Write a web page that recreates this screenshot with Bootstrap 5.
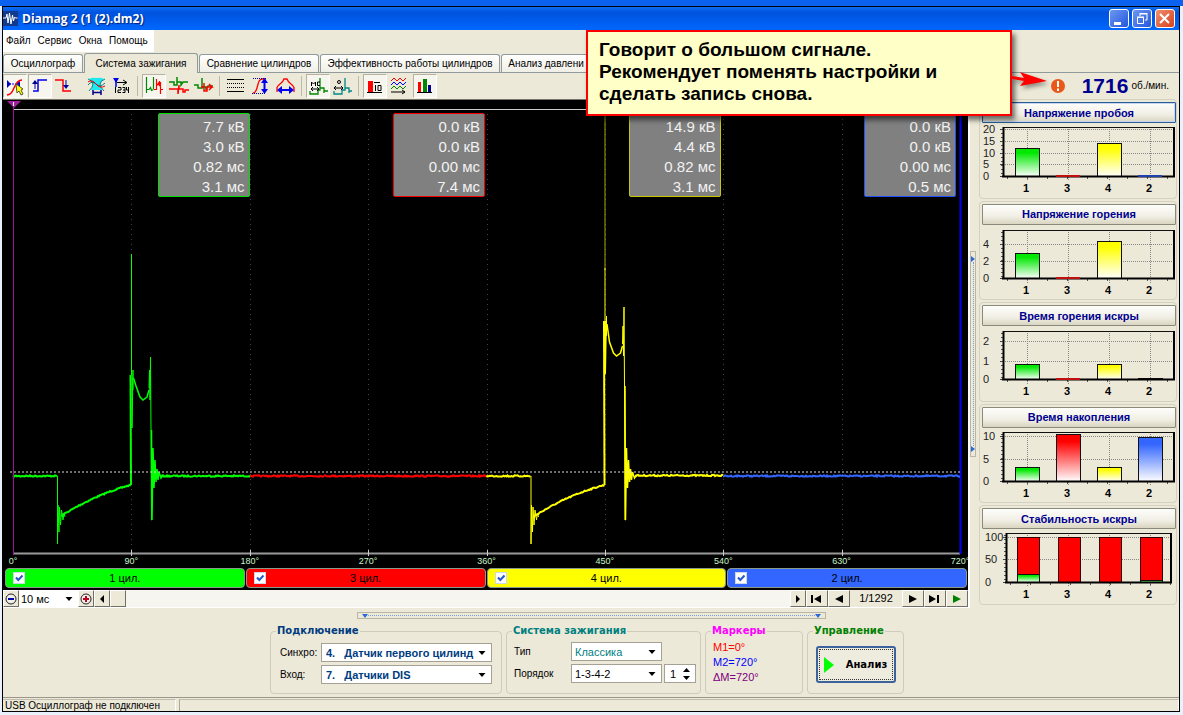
<!DOCTYPE html>
<html lang="ru">
<head>
<meta charset="utf-8">
<meta name="viewport" content="width=device-width, initial-scale=1">
<title>Diamag 2</title>
<link href="https://cdn.jsdelivr.net/npm/bootstrap@5.3.0/dist/css/bootstrap.min.css" rel="stylesheet">
<style>
:root { --face:#ece9d8; --line:#aca899; --ui:"Liberation Sans",Arial,sans-serif; --wide:"DejaVu Sans",Verdana,sans-serif; }
body { background:#e9f1fd; font:10px/14px var(--ui); color:#000; }
.parent-strip { height:6px; background:#0a62ee; }
.app { margin:0 3px 3px 2px; border:1px solid #000; background:var(--face); position:relative; }
.titlebar { height:23px; background:linear-gradient(#0a6cf5,#0052dd 25%,#005cee 60%,#0068ff); color:#fff; font:bold 12px/22px "Open Sans",sans-serif; text-shadow:1px 1px 1px #00207a; }
.win-btn { width:20px; height:19px; border:1px solid #fff; border-radius:3px; background:linear-gradient(135deg,#6d97f2,#2458dc); padding:0; display:flex; }
.win-btn.shut { background:linear-gradient(135deg,#f09070,#d8401c); }
.menubar { height:22px; width:151px; background:#fff; padding:0 3px; gap:7px; }
.menubar a { color:#000; text-decoration:none; line-height:22px; }
.tabstrip { height:21px; padding-top:2px; border-bottom:1px solid #919b9c; gap:1px; }
.tabstrip .nav-link { height:18px; padding:0; margin:0; border:1px solid #919b9c; border-bottom:0; border-radius:3px 3px 0 0; background:linear-gradient(#fff,#f0efe6); color:#000; line-height:17px; text-align:center; white-space:nowrap; overflow:hidden; }
.tabstrip .nav-link.active { height:20px; margin:-1px 0 -1px; background:var(--face); color:#000; }
.t1 { width:80px; } .t2 { width:114px; } .t3 { width:120px; } .t4 { width:180px; } .t5 { width:90px; }
.toolbar { height:26px; gap:1px; }
.tool { width:24px; height:24px; padding:0; border:1px solid transparent; border-radius:0; background:none; display:flex; }
.tool.on { border-color:#b5b2a2 #fff #fff #b5b2a2; background:#f6f5ee; }
.tool svg { margin:-1px; }
.tool-sep { width:6px; height:20px; border-left:1px solid #bdb9a8; margin-left:2px; margin-right:-2px; }
.tool-sep.ghost { border-color:transparent; }
.work { min-height:460px; }
.left-col { min-width:0; border-right:2px solid #fff; }
.scope { background:#000; min-height:300px; border-top:1px solid #77756b; overflow:hidden; }
.scope-grid { inset:0 12px 0 11px; }
.readout { width:92px; height:84px; margin:13px 0 0; border:1px solid; border-radius:2px; background:#808080; color:#f2f2f2; font-size:15px; line-height:20px; padding:3px 4px; text-align:right; white-space:nowrap; }
.r-g { border-color:#00e000; } .r-r { border-color:#f00000; } .r-y { border-color:#c8c800; } .r-b { border-color:#2050ff; }
.readout span { color:#f2f2f2; }
.degrees { left:10px; right:8px; bottom:0; height:13px; color:#c8f5c8; font:9px/13px var(--ui); }
.degrees span { width:0; display:flex; justify-content:center; white-space:nowrap; }
.cyls { background:#000; height:22px; padding:0 1px 2px 2px; gap:1px; }
.cyl { font-size:11px; border:1px solid #8a9a8a; border-radius:4px; height:20px; display:grid; grid-template-columns:12px 1fr 12px; align-items:center; padding:0 7px; text-align:center; }
.cyl input { appearance:none; margin:0; width:12px; height:12px; background:#fff; border:1px solid #cfd8e6; }
.cyl input:checked { background:#fff url("data:image/svg+xml,%3Csvg xmlns='http://www.w3.org/2000/svg' viewBox='0 0 10 10'%3E%3Cpath d='M2 4.5L4.3 7 8.5 2.5' fill='none' stroke='%232858c8' stroke-width='2'/%3E%3C/svg%3E"); }
.c-g { background:#0f0; } .c-r { background:#f00; } .c-y { background:#ff0; } .c-b { background:#3366ff; }
.player { height:18px; background:#f6f5ef; border-bottom:1px solid #fff; font-size:11px; }
.frame-no { width:52px; line-height:17px; background:var(--face); }
.pbtn { height:17px; width:22px; padding:0; border:1px solid; border-color:#fff #716f64 #716f64 #fff; border-radius:0; background:var(--face); display:flex; align-items:center; justify-content:center; }
.pbtn.slim { width:16px; }
.player .form-select { width:59px; border:0; height:17px; padding-left:2px; }
.form-select { --arrow:url("data:image/svg+xml,%3Csvg xmlns='http://www.w3.org/2000/svg' viewBox='0 0 8 4'%3E%3Cpath d='M0.5 0h7L4 4z'/%3E%3C/svg%3E"); font-size:11px; line-height:14px; padding:1px 16px 1px 3px; border:1px solid #a5a295; border-radius:0; color:#000; background:#fff var(--arrow) no-repeat right 5px center/8px 4px; height:19px; min-height:0; }
.vsplit { width:7px; margin-right:1px; padding-top:26px; }
.grip-v { width:6px; height:206px; border:1px solid #b9b6a6; }
.grip-v i { flex:1; border-left:1px dotted #7ba0dc; }
.grip-h { width:469px; height:7px; border:1px solid #b9b6a6; margin:4px auto 6px; }
.grip-h i { flex:1; border-top:1px dotted #7ba0dc; }
.right-col { width:201px; padding:0 2px 3px 1px; }
.rpm { height:26px; padding-right:8px; }
.rpm b { font-size:21px; line-height:26px; color:#000090; margin:0 3px 0 16px; }
.meter { border:1px solid #d5d1c0; border-radius:4px; padding:2px; margin-bottom:2px; min-height:94px; }
.meter:last-child { margin-bottom:0; }
.meter .btn { width:194px; height:21px; padding:0; border:1px solid #8b8a7a; border-radius:1px; background:linear-gradient(#fdfdfb,#f1efe4 60%,#d9d5c2); color:#000090; font:bold 11px/18px var(--ui); }
.meter.hot .btn { border-color:#2c5c96; box-shadow:inset 0 0 0 1px #c5d6f0; }
.meter svg { display:block; overflow:visible; }
.meter text { font:11px var(--ui); }
.meter text.num { font-weight:bold; text-anchor:middle; }
fieldset.grp { height:69px; border:1px solid #cfccbb; border-radius:4px; margin:0; padding:0 4px; min-width:0; }
.grp legend { float:none; width:auto; margin:0 0 0 1px; padding:0 1px; font:bold 10px/12px var(--wide); }
.g1 { width:232px; } .g2 { width:195px; } .g3 { width:98px; } .g4 { width:97px; }
.grp label { white-space:nowrap; flex-shrink:0; }
.g1 label { width:41px; margin-left:5px; } .g2 label { width:57px; margin-left:3px; }
.g1 .form-select { width:171px; font:bold 11px/14px var(--ui); color:#003c80; padding-left:4px; }
.lg1 { color:#003c80; } .lg2 { color:#008080; } .lg3 { color:#f0f; } .lg4 { color:#008000; }
.g2 .form-select { width:91px; }
.teal.form-select { color:#008080; }
.marks { line-height:15px; padding:3px 3px 0; font-size:11px; }
.spin { width:32px; height:19px; border:1px solid #a5a295; background:#fff; margin-left:2px; }
.spin input { width:15px; border:0; padding:0 0 0 5px; background:none; font-size:11px; outline:0; }
.spin button { border:0; background:none; padding:0; height:8px; display:flex; align-items:center; justify-content:center; width:12px; }
.run { width:80px; height:37px; margin:9px auto 0; display:flex; padding:0; border:2px solid #3c639c; border-radius:3px; background:#eeecdf; font:bold 10px/14px var(--wide); outline:1px dotted #333; outline-offset:-4px; }
.statusbar { height:14px; margin-top:3px; border-top:1px solid #9a978a; overflow:hidden; }
.statusbar div { margin-top:1px; border-top:1px solid #c0bdad; border-right:1px solid #fff; height:14px; line-height:12px; padding-left:2px; white-space:nowrap; }
.statusbar .s1 { width:173px; } .statusbar .s2 { border-left:1px solid var(--line); margin-left:3px; }
.callout { left:583px; top:23px; width:426px; height:86px; border:2px solid #f00; background:#ffffc8; box-shadow:3px 4px 5px rgba(0,0,0,.55); padding:7px 11px; font:bold 19px/22px var(--ui); z-index:5; }
.callout svg { position:absolute; left:424px; top:36px; overflow:visible; filter:drop-shadow(2px 3px 2px rgba(0,0,0,.4)); }
</style>
</head>
<body class="d-flex flex-column min-vh-100">
<div class="parent-strip"></div>
<main class="app d-flex flex-column flex-grow-1">
  <header class="titlebar d-flex align-items-center">
    <svg width="15" height="15" viewBox="0 0 15 15" class="flex-shrink-0"><rect width="15" height="15" fill="#123a8c"/><path d="M0 7h3l1-4 1 9 1.500-10 1.500 11 1.500-9 1 6 1-4 1 1h2" fill="none" stroke="#fff"/></svg>
    <span class="me-auto ps-1 text-nowrap">Diamag 2 (1 (2).dm2)</span>
    <div class="d-flex me-1" style="gap:3px">
      <button class="win-btn" aria-label="Свернуть"><svg width="18" height="17"><path d="M4 12h7v3H4z" fill="#fff"/></svg></button>
      <button class="win-btn" aria-label="Восстановить"><svg width="18" height="17" fill="none" stroke="#fff"><path d="M7 6V4h7v6h-2M6.500 3.500h8M4.500 7.500h6v6h-6zM4 7h7"/></svg></button>
      <button class="win-btn shut" aria-label="Закрыть"><svg width="18" height="17"><path d="M4 4l9 9M13 4l-9 9" stroke="#fff" stroke-width="2"/></svg></button>
    </div>
  </header>
  <nav class="menubar d-flex"><a href="#">Файл</a><a href="#">Сервис</a><a href="#">Окна</a><a href="#">Помощь</a></nav>
  <div class="tabstrip d-flex align-items-end" role="tablist">
    <button class="nav-link t1" role="tab">Осциллограф</button>
    <button class="nav-link active t2" role="tab">Система зажигания</button>
    <button class="nav-link t3" role="tab">Сравнение цилиндров</button>
    <button class="nav-link t4" role="tab">Эффективность работы цилиндров</button>
    <button class="nav-link t5" role="tab">Анализ давлени</button>
  </div>

  <div class="work d-flex flex-grow-1">
    <section class="left-col d-flex flex-column flex-grow-1">
      <div class="toolbar d-flex align-items-center">
        <button class="tool on" aria-label="Маркеры"><svg width="24" height="24" fill="none"><path d="M6 10h9" stroke="#00f" stroke-dasharray="2 1"/><path d="M4 6v8l4-4zM17 7v6l-4-3z" fill="#00c"/><path d="M4 21c3 0 5-2 7-7s4-8 8-8" stroke="#f00" stroke-width="1.500"/><path d="M13 10l1 9 2-2 2 4 2-1-2-4 2-1z" fill="#ff0" stroke="#553"/></svg></button>
        <button class="tool on" aria-label="Фронт"><svg width="24" height="24" fill="none"><path d="M5 17h5V6h9" stroke="#00e" stroke-width="1.500"/><path d="M7 15V8" stroke="#008"/><path d="M4 10l3-4 3 4z" fill="#008"/></svg></button>
        <button class="tool" aria-label="Спад"><svg width="24" height="24" fill="none"><path d="M2 6h8v11h8" stroke="#f00" stroke-width="1.500"/><path d="M13 6v7" stroke="#00a"/><path d="M10 11h6l-3 4z" fill="#00a"/></svg></button>
        <span class="tool-sep ghost"></span>
        <button class="tool" aria-label="Фильтр"><svg width="24" height="24" fill="none"><path d="M4 5q3-2 7-1 5-1 8 1l-4 5 2 6H6l2-6z" fill="#20e8f0"/><path d="M3 5q5 2 5 5t-4 7M20 5q-5 2-5 5t4 7" stroke="#088"/><path d="M3 11q4-5 8-1t9-1" stroke="#088"/><path d="M3 8q4-3 8 2t9 2" stroke="#e00"/><path d="M8 16v5M16 16v5M8 18.500h8" stroke="#008" stroke-width="1.500"/></svg></button>
        <button class="tool" aria-label="Нумерация"><svg width="24" height="24" fill="none"><path d="M3 4h6L6 9z" fill="#00e"/><path d="M6 5v8" stroke="#00e" stroke-width="1.500"/><path d="M7 8.500h9" stroke="#000"/><path d="M13 6l4 2.500-4 2.500" stroke="#000"/><path d="M5.500 13v6M8 13.500h3v2.500H8v2.500h3M12.500 13.500h2.500v5h-2.500M13 16h2M16.500 13v3h2.500M18.500 13v6" stroke="#000"/></svg></button>
        <span class="tool-sep"></span>
        <button class="tool on" aria-label="Последовательно"><svg width="24" height="24" fill="none"><path d="M4.500 3v16M4 15.500h3l1.500-2 1 3 2-1M11.500 3v12" stroke="#080" stroke-width="1.200"/><path d="M12 15.500h2.500V5M14.500 12l2-3 1 3V7M18.500 8v12M18 15.500h3" stroke="#f00" stroke-width="1.200"/></svg></button>
        <button class="tool" aria-label="Друг под другом"><svg width="24" height="24" fill="none" stroke-width="1.500"><path d="M2 8h5v3h3V3v5h4v3l2-3h5" stroke="#080"/><path d="M2 15h9v5l1-9v4h4v3h2v-2h4" stroke="#f00"/></svg></button>
        <button class="tool" aria-label="Наложение"><svg width="24" height="24" fill="none" stroke-width="1.500"><path d="M2 11h4v3h4V4v9h4v3l2-4h5" stroke="#080"/><path d="M9 13h3V9v8h3v-4h5l-3-3M17 16l3-3" stroke="#f00"/></svg></button>
        <span class="tool-sep"></span>
        <button class="tool" aria-label="Линии"><svg width="24" height="24" stroke="#000"><path d="M3 5.500h17M3 17.500h17"/><path d="M3 9.500h17M3 13.500h17" stroke-dasharray="1 1"/></svg></button>
        <button class="tool" aria-label="Высота"><svg width="24" height="24" fill="none"><path d="M4 19c6 0 3-14 9-14h4" stroke="#f00" stroke-width="1.300"/><path d="M4 4.500h13M3 19.500h13" stroke="#00a" stroke-dasharray="1 1"/><path d="M15.500 8v8" stroke="#00e" stroke-width="2"/><path d="M12 9l3.500-5L19 9zM12 15l3.500 5 3.500-5z" fill="#00e"/></svg></button>
        <button class="tool" aria-label="Ширина"><svg width="24" height="24" fill="none"><path d="M3 15q0-3 3-5t4-5h3q1 3 4 5t3 5M3 13v5M20 13v5" stroke="#f00" stroke-width="1.300"/><path d="M7 16h9" stroke="#00e" stroke-width="2"/><path d="M8 12l-5 4 5 4zM15 12l5 4-5 4z" fill="#00e"/></svg></button>
        <span class="tool-sep"></span>
        <button class="tool on" aria-label="Миллисекунды"><svg width="24" height="24" fill="none"><path d="M4 17v3h8v-4h2V4v10h4v5M18 17h4" stroke="#080" stroke-width="1.300"/><path d="M5.500 12V8l2 2 2-2v4M14 8h-2.500v3.500H14" stroke="#000"/><path d="M5 15h8M7 13l-2 2 2 2M11 13l2 2-2 2" stroke="#000"/></svg></button>
        <button class="tool" aria-label="Градусы"><svg width="24" height="24" fill="none"><path d="M3 17v3h8v-4h3V4v10h4v5M18 17h3" stroke="#088" stroke-width="1.300"/><circle cx="8" cy="8" r="1.500" stroke="#000"/><path d="M3 14h9M5 12l-2 2 2 2M10 12l2 2-2 2" stroke="#000"/></svg></button>
        <span class="tool-sep"></span>
        <button class="tool on" aria-label="Цифры"><svg width="24" height="24" fill="none"><path d="M5 7h5v12H5z" fill="#f00"/><path d="M4 18.500h15M11 8.500h6" stroke="#000"/><path d="M12.500 11v6M15 11.500h3v5h-3z" stroke="#000"/></svg></button>
        <button class="tool" aria-label="Кривые"><svg width="24" height="24" fill="none"><path d="M3 7l3-3 3 3 3-3 3 3 3-3" stroke="#f00"/><path d="M3 11l3-3 3 3 3-3 3 3 3-3" stroke="#00f"/><path d="M3 15l3-3 3 3 3-3 3 3 3-3" stroke="#080"/><path d="M3 18h14M14 16l3 2-3 2" stroke="#000"/></svg></button>
        <button class="tool on" aria-label="Столбцы"><svg width="24" height="24"><path d="M5 8h3v11H5z" fill="#f00"/><path d="M10 5h4v14h-4z" fill="#080"/><path d="M15 11h3v8h-3z" fill="#008"/><path d="M4 18.500h15" stroke="#000"/></svg></button>
      </div>

      <div class="scope position-relative flex-grow-1">
        <svg id="wave" class="position-absolute top-0 start-0 w-100 h-100" viewBox="0 0 965 468" preserveAspectRatio="none" fill="none">
          <g stroke="#444" stroke-dasharray="1 4"><path d="M128.500 9v445M247.500 9v445M365.500 9v445M484.500 9v445M602.500 9v445M720.500 9v445M839.500 9v445"/></g>
          <path d="M10 9.500H957" stroke="#ccc"/>
          <path d="M10 453.500H957" stroke="#999" stroke-width="2"/>
          <path d="M128.500 450v6M247.500 450v6M365.500 450v6M484.500 450v6M602.500 450v6M720.500 450v6M839.500 450v6" stroke="#ccc"/>
          <path d="M957.500 9v445" stroke="#00f" stroke-width="2"/>
        </svg>
        <div class="scope-grid position-absolute"><div class="row row-cols-4 g-0">
          <div class="col d-flex justify-content-end"><div class="readout r-g"><span>7.7 кВ<br>3.0 кВ<br>0.82 мс<br>3.1 мс</span></div></div>
          <div class="col d-flex justify-content-end"><div class="readout r-r"><span>0.0 кВ<br>0.0 кВ<br>0.00 мс<br>7.4 мс</span></div></div>
          <div class="col d-flex justify-content-end"><div class="readout r-y"><span>14.9 кВ<br>4.4 кВ<br>0.82 мс<br>3.1 мс</span></div></div>
          <div class="col d-flex justify-content-end"><div class="readout r-b"><span>0.0 кВ<br>0.0 кВ<br>0.00 мс<br>0.5 мс</span></div></div>
        </div></div>
        <div class="degrees position-absolute d-flex justify-content-between"><span>0°</span><span>90°</span><span>180°</span><span>270°</span><span>360°</span><span>450°</span><span>540°</span><span>630°</span><span>720°</span></div>
      </div>
      <div class="cyls d-flex">
        <label class="cyl c-g flex-fill"><input type="checkbox" checked>1 цил.</label>
        <label class="cyl c-r flex-fill"><input type="checkbox" checked>3 цил.</label>
        <label class="cyl c-y flex-fill"><input type="checkbox" checked>4 цил.</label>
        <label class="cyl c-b flex-fill"><input type="checkbox" checked>2 цил.</label>
      </div>
      <div class="player d-flex">
        <button class="pbtn slim" aria-label="Уменьшить"><svg width="12" height="12"><circle cx="6" cy="6" r="5" fill="#f2f0e8" stroke="#222"/><path d="M3 6h6" stroke="#00a" stroke-width="2"/></svg></button>
        <select class="form-select" aria-label="Развёртка"><option>10 мс</option></select>
        <button class="pbtn slim" aria-label="Увеличить"><svg width="12" height="12"><circle cx="6" cy="6" r="5" fill="#f2f0e8" stroke="#222"/><path d="M3 6h6M6 3v6" stroke="#c00020" stroke-width="2"/></svg></button>
        <button class="pbtn slim" aria-label="Влево"><svg width="4" height="8"><path d="M4 0v8L0 4z"/></svg></button>
        <button class="pbtn slim me-auto" aria-label="Ползунок"></button>
        <button class="pbtn slim" aria-label="Вправо"><svg width="4" height="8"><path d="M0 0v8l4-4z"/></svg></button>
        <button class="pbtn" aria-label="Первый"><svg width="12" height="8"><path d="M0 0h2v8H0zM10 0v8L3 4z"/></svg></button>
        <button class="pbtn" aria-label="Назад"><svg width="8" height="8"><path d="M8 0v8L0 4z"/></svg></button>
        <span class="frame-no text-center flex-shrink-0">1/1292</span>
        <button class="pbtn" aria-label="Вперёд"><svg width="8" height="8"><path d="M0 0v8l8-4z"/></svg></button>
        <button class="pbtn" aria-label="Последний"><svg width="12" height="8"><path d="M0 0v8l7-4zM8 0h2v8H8z"/></svg></button>
        <button class="pbtn" aria-label="Пуск"><svg width="8" height="8"><path d="M0 0v8l8-4z" fill="#008000"/></svg></button>
      </div>
    </section>

    <div class="vsplit d-flex align-items-center">
      <div class="grip-v d-flex flex-column align-items-center py-1"><svg width="4" height="6"><path d="M0 0v6l4-3z" fill="#2a6ad8"/></svg><i></i><svg width="4" height="6"><path d="M0 0v6l4-3z" fill="#2a6ad8"/></svg></div>
    </div>

    <aside class="right-col d-flex flex-column">
      <div class="rpm d-flex align-items-center justify-content-end">
        <svg width="16" height="16"><circle cx="8" cy="8" r="7" fill="#e85818"/><path d="M8 3v6M8 10.500v2.500" stroke="#fff" stroke-width="2"/></svg>
        <b>1716</b><span class="text-nowrap">об./мин.</span>
      </div>
      <div id="meters" class="d-flex flex-column flex-grow-1"></div>
    </aside>
  </div>

  <div class="grip-h d-flex align-items-center px-1"><svg width="6" height="4"><path d="M0 0h6L3 4z" fill="#2a6ad8"/></svg><i></i><svg width="6" height="4"><path d="M0 0h6L3 4z" fill="#2a6ad8"/></svg></div>

  <form class="d-flex justify-content-center pe-2" style="gap:4px">
    <fieldset class="grp g1"><legend class="lg1">Подключение</legend>
      <div class="d-flex align-items-center" style="padding-top:6px"><label for="sync">Синхро:</label><select id="sync" class="form-select"><option>4.&nbsp;&nbsp; Датчик первого цилинд</option></select></div>
      <div class="d-flex align-items-center" style="padding-top:3px"><label for="inp">Вход:</label><select id="inp" class="form-select"><option>7.&nbsp;&nbsp; Датчики DIS</option></select></div>
    </fieldset>
    <fieldset class="grp g2"><legend class="lg2">Система зажигания</legend>
      <div class="d-flex align-items-center" style="padding-top:5px"><label for="kind">Тип</label><select id="kind" class="form-select teal"><option>Классика</option></select></div>
      <div class="d-flex align-items-center" style="padding-top:3px"><label for="ord">Порядок</label><select id="ord" class="form-select"><option>1-3-4-2</option></select>
        <div class="spin d-flex align-items-center"><input type="text" value="1" aria-label="Номер цилиндра"><div><button type="button" aria-label="Больше"><svg width="7" height="4"><path d="M0 4h7L3.500 0z"/></svg></button><button type="button" aria-label="Меньше"><svg width="7" height="4"><path d="M0 0h7L3.500 4z"/></svg></button></div></div></div>
    </fieldset>
    <fieldset class="grp g3"><legend class="lg3">Маркеры</legend>
      <div class="marks"><div style="color:#f00">M1=0°</div><div style="color:#00f">M2=720°</div><div style="color:#800080">ΔM=720°</div></div>
    </fieldset>
    <fieldset class="grp g4"><legend class="lg4">Управление</legend>
      <button type="button" class="run align-items-center justify-content-center"><svg width="10" height="16" class="me-2"><path d="M0 0v16l10-8z" fill="#0f0"/></svg><span class="ms-1">Анализ</span></button>
    </fieldset>
  </form>

  <footer class="statusbar d-flex"><div class="s1">USB Осциллограф не подключен</div><div class="s2 flex-grow-1"></div></footer>

  <div class="callout position-absolute">Говорит о большом сигнале.<br>Рекомендует поменять настройки и<br>сделать запись снова.
    <svg width="36" height="20"><path d="M0 8l12 2-4-6 27 9-27 5 4-5-12-2z" fill="#f00"/></svg>
  </div>
</main>
<script src="https://cdn.jsdelivr.net/npm/bootstrap@5.3.0/dist/js/bootstrap.bundle.min.js"></script>
<script>
/* Traces: one firing pulse per working cylinder, flat noisy line for the rest */
const wave = document.getElementById('wave');
let seed = 7;
const rnd = () => (seed = (seed * 16807) % 2147483647) / 2147483647 - 0.5;
const trace = (pts, color, width = 1) => wave.insertAdjacentHTML('beforeend',
  `<polyline points="${pts.map(p => p.join(',')).join(' ')}" stroke="${color}" stroke-width="${width}"/>`);
const flat = (x0, x1, y) => { const a = []; for (let x = x0; x <= x1; x++) a.push([x, +(y + rnd() * 1.4).toFixed(1)]); return a; };
const charge = x => {
  const a = [];
  for (let i = 0; i <= 70; i++) { const t = i / 70; a.push([x + i, +(416 - 44 * t + 13 * t * t + rnd() * 1.2).toFixed(1)]); }
  return a;
};
const pulse = (x, color, peak, top, dip, end) => {
  trace(flat(x, x + 44, 376), color, 2);
  trace([[x+44.5,376],[x+44.5,444],[x+45,405],[x+46,432],[x+46.5,407],[x+47.5,425],[x+48.5,410],[x+50,420],[x+51,413],[x+52,417]], color);
  trace(charge(x + 48), color, 2);
  trace([[x+118,385],[x+117.5,top+5]], color, 2);
  trace([[x+118.5,top+5],[x+118.5,peak]], color);
  trace([[x+119,top+5],[x+119,top+58],[x+120,top],[x+120,top+20]], color);
  trace([[x+120.5,top+8],[x+123,dip-14],[x+127,dip-3],[x+130,dip],[x+134,dip-3],[x+136,dip-10]], color, 1.5);
  trace([[x+136,dip-12],[x+136.5,dip-30],[x+137,dip],[x+137.5,end],[x+138,dip+30],[x+138.5,420],[x+139,420]], color);
  trace([[x+138.5,dip+30],[x+139,420],[x+140,348],[x+141,388],[x+142,360],[x+143,382],[x+144,369],[x+145,380],[x+146,372],[x+148,378],[x+150,375]], color, 1.5);
};
pulse(10, '#00ff00', 154, 270, 300, 257);
trace(flat(158, 247, 376), '#00ff00', 2);
trace(flat(247, 484, 376), '#ff0000', 2);
trace([[602, 14], [602, 170]], '#a8a800');
pulse(483.5, '#ffff00', 168, 216, 256, 207);
trace(flat(632, 720, 375.5), '#ffff00', 2);
trace(flat(720, 957, 376), '#3366ff', 2);
wave.insertAdjacentHTML('beforeend', '<path d="M7 372H957" stroke="#ddd" stroke-dasharray="2 2"/><path d="M10.500 3v452" stroke="#a010a0"/><path d="M4 1h14l-7 7z" fill="#a020a0"/><path d="M10.500 2v4" stroke="#fff"/>');

/* Bar meters: heights are pixels above the base line */
const colors = { g: '#00e800', r: '#ff0000', y: '#ffff00', b: '#3366ff' };
const meters = [
  { name: 'Напряжение пробоя', hot: 1, h: 49, ticks: [[20, 47], [15, 35], [10, 23], [5, 12], [0, 0]], bars: [['g', 28], ['r', 0], ['y', 33], ['b', 0]] },
  { name: 'Напряжение горения', h: 48, ticks: [[4, 34], [2, 17], [0, 0]], bars: [['g', 25], ['r', 0], ['y', 37], null] },
  { name: 'Время горения искры', h: 48, ticks: [[2, 38], [1, 18], [0, 0]], bars: [['g', 15], ['r', 0], ['y', 15], ['b', 1]] },
  { name: 'Время накопления', h: 49, ticks: [[10, 45], [5, 22], [0, 0]], bars: [['g', 14], ['r', 47], ['y', 14], ['b', 44]] },
  { name: 'Стабильность искры', h: 49, inset: 3, ticks: [[100, 45], [50, 23], [0, 0]], full: 45, bars: [['g', 8], ['g', 0], ['g', 0], ['g', 2]] }
];
document.getElementById('meters').innerHTML = meters.map((m, k) => {
  const base = 53, L = 21 + (m.inset || 0), R = 192 - (m.inset || 0), top = base - m.h;
  let s = '<defs>' + Object.entries(colors).map(([n, c]) => `<linearGradient id="f${k}${n}" x2="0" y2="1"><stop offset=".15" stop-color="${c}"/><stop offset="1" stop-color="#fff"/></linearGradient>`).join('') + '</defs>';
  m.ticks.forEach(([v, y]) => {
    s += `<text x="${m.inset ? 3 : 1}" y="${base - y + 4}" fill="#222">${v}</text><path d="M${L - 3} ${base - y + .5}h3" stroke="#444"/>`;
    if (y) s += `<path d="M${L} ${base - y + .5}H${R}" stroke="#888" stroke-dasharray="1 1"/>`;
  });
  for (let y = top + 2; y < base; y += 4) s += `<path d="M${L - 2} ${y + .5}h2" stroke="#555"/>`;
  for (let x = L + 4; x < R; x += 20) s += `<path d="M${x + .5} ${base}v3" stroke="#555"/>`;
  m.bars.forEach((b, i) => {
    const c = 45 + i * 41;
    s += `<path d="M${c + .5} ${top}V${base + 5}" stroke="#888" stroke-dasharray="1 1"/>`;
    if (m.full) s += `<rect x="${c - 9.5}" y="${base - m.full + .5}" width="22" height="${m.full}" fill="#f00" stroke="#300"/>`;
    if (b && b[1]) s += `<rect x="${c - (m.full ? 10 : 12) + .5}" y="${base - b[1] + .5}" width="${m.full ? 22 : 24}" height="${b[1]}" fill="url(#f${k}${b[0]})" stroke="#111"/>`;
    s += `<text class="num" x="${c - 1}" y="${base + 16}">${[1, 3, 4, 2][i]}</text>`;
  });
  s += `<path d="M${L} ${top + .5}H${R}V${base}" fill="none" stroke="#111"/><path d="M${L + .5} ${top}V${base}M${L - 1} ${base + .5}H${R + 1}M${R} ${top}V${base}" stroke="#000" stroke-width="2"/>`;
  m.bars.forEach((b, i) => { if (b && !b[1] && !m.full) s += `<path d="M${33 + i * 41} ${base}h24" stroke="${b[0] === 'r' ? '#c01010' : '#2040b0'}" stroke-width="2"/>`; });
  return `<div class="meter flex-fill${m.hot ? ' hot' : ''}"><button class="btn">${m.name}</button><svg width="194" height="70">${s}</svg></div>`;
}).join('');
</script>
</body>
</html>
